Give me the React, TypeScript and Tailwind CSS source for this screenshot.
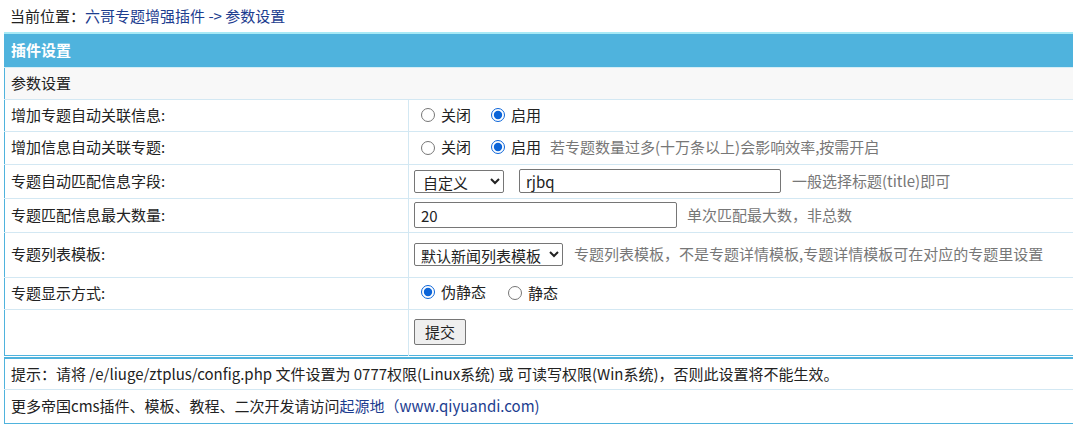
import React from 'react';

const font = { fontFamily: '"Microsoft YaHei", "Noto Sans CJK SC", "Noto Sans", sans-serif' };

function Radio({ name, label, checked }: { name: string; label: string; checked?: boolean }) {
  return (
    <label className="inline-flex items-center mr-[13px]">
      <input
        type="radio"
        name={name}
        defaultChecked={checked}
        className="w-[14px] h-[14px] ml-[7px] mr-[6px] accent-[#0b64d8]"
      />
      <span>{label}</span>
    </label>
  );
}

function Row({ label, h, children }: { label: string; h: string; children?: React.ReactNode }) {
  return (
    <tr className={`${h} border-t border-[#d3e8f3]`}>
      <td className="w-[404px] pl-[6px] border-r border-[#d3e8f3] align-middle">{label}</td>
      <td className="pl-[5px] align-middle">
        <div className="flex items-center">{children}</div>
      </td>
    </tr>
  );
}

export default function App() {
  return (
    <div className="w-[1073px] h-[430px] overflow-hidden bg-white text-[15px] text-[#222]" style={font}>
      <div className="h-[32px] flex items-center pl-[10px]">
        当前位置：<a className="text-[#1c3d8f]">六哥专题增强插件 -&gt; 参数设置</a>
      </div>

      <div className="pl-[4px]">
        <table className="w-[1080px] border-collapse border border-[#4fb3dd]">
          <tbody>
            <tr className="h-[34px] bg-[#4fb3dd] border-t-2 border-t-[#a8eaf6]">
              <td colSpan={2} className="pl-[6px] text-white font-bold">插件设置</td>
            </tr>
            <tr className="h-[32px] bg-[#f8f8f8] border-t border-[#d6eef6]">
              <td colSpan={2} className="pl-[6px]">参数设置</td>
            </tr>
            <Row label="增加专题自动关联信息:" h="h-[32px]">
              <Radio name="a" label="关闭" />
              <Radio name="a" label="启用" checked />
            </Row>
            <Row label="增加信息自动关联专题:" h="h-[33px]">
              <Radio name="b" label="关闭" />
              <span className="mr-[-4px]">
                <Radio name="b" label="启用" checked />
              </span>
              <span className="text-[#777]">若专题数量过多(十万条以上)会影响效率,按需开启</span>
            </Row>
            <Row label="专题自动匹配信息字段:" h="h-[34px]">
              <select className="w-[90px] h-[23px] border border-[#767676] rounded-[2px] px-[4px] mr-[15px] bg-white">
                <option>自定义</option>
                <option>标题(title)</option>
              </select>
              <input
                defaultValue="rjbq"
                className="w-[262px] h-[24px] border border-[#767676] rounded-[2px] px-[6px] mr-[11px]"
              />
              <span className="text-[#777]">一般选择标题(title)即可</span>
            </Row>
            <Row label="专题匹配信息最大数量:" h="h-[34px]">
              <input
                defaultValue="20"
                className="w-[263px] h-[26px] border border-[#767676] rounded-[2px] px-[6px] mr-[10px]"
              />
              <span className="text-[#777]">单次匹配最大数，非总数</span>
            </Row>
            <Row label="专题列表模板:" h="h-[45px]">
              <select className="w-[149px] h-[23px] border border-[#767676] rounded-[2px] px-[2px] mr-[11px] bg-white">
                <option>默认新闻列表模板</option>
              </select>
              <span className="text-[#777]">专题列表模板，不是专题详情模板,专题详情模板可在对应的专题里设置</span>
            </Row>
            <Row label="专题显示方式:" h="h-[32px]">
              <span className="mr-[2px]">
                <Radio name="c" label="伪静态" checked />
              </span>
              <Radio name="c" label="静态" />
            </Row>
            <Row label="" h="h-[46px]">
              <button className="h-[26px] px-[10px] border border-[#767676] rounded-[2px] bg-[#efefef]">提交</button>
            </Row>
          </tbody>
        </table>

        <table className="w-[1080px] mt-[1px] border-collapse border border-[#4fb3dd] border-t-2">
          <tbody>
            <tr className="h-[32px]">
              <td className="pl-[6px]">
                提示：请将 /e/liuge/ztplus/config.php 文件设置为 0777权限(Linux系统) 或 可读写权限(Win系统)，否则此设置将不能生效。
              </td>
            </tr>
            <tr className="h-[34px] border-t border-[#d3e8f3]">
              <td className="pl-[6px]">
                更多帝国cms插件、模板、教程、二次开发请访问<a className="text-[#1c3d8f]">起源地（www.qiyuandi.com)</a>
              </td>
            </tr>
          </tbody>
        </table>
      </div>
    </div>
  );
}
